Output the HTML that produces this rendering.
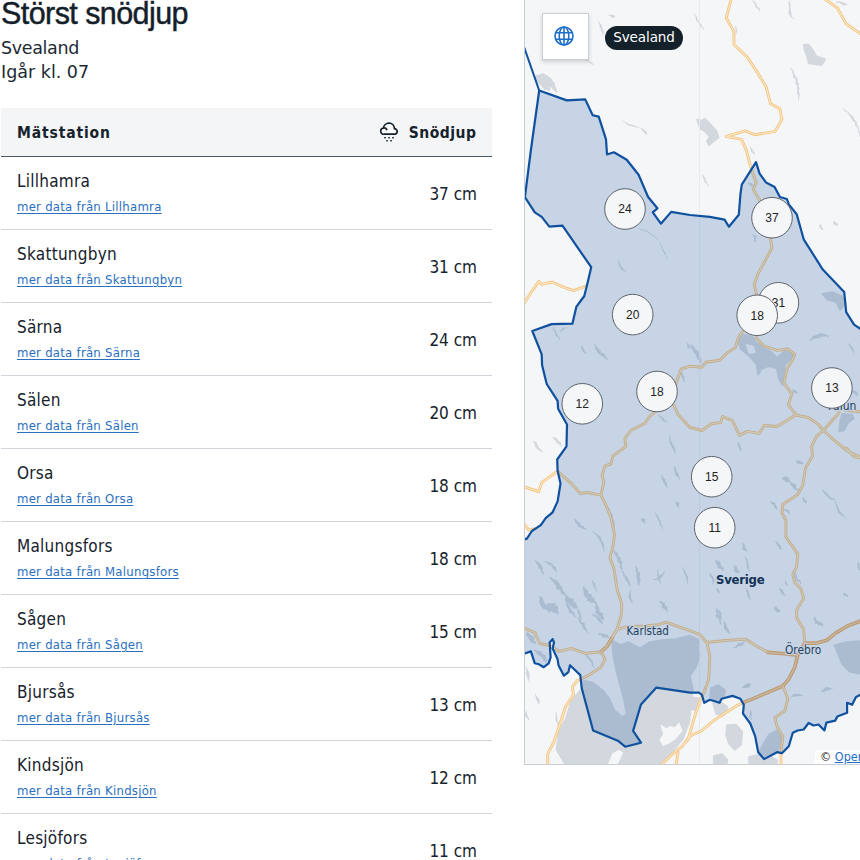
<!DOCTYPE html>
<html lang="sv">
<head>
<meta charset="utf-8">
<title>Störst snödjup</title>
<style>
*{box-sizing:border-box;margin:0;padding:0}
html,body{width:860px;height:860px;overflow:hidden;background:#fff}
body{position:relative;font-family:"DejaVu Sans Condensed","DejaVu Sans","Liberation Sans",sans-serif;color:#16222c}
h1{position:absolute;left:1px;top:-7px;font-family:"Liberation Sans",sans-serif;font-weight:400;font-size:30.5px;line-height:40px;letter-spacing:-0.57px;white-space:nowrap;color:#13202a;-webkit-text-stroke:0.45px #13202a}
.sub{position:absolute;left:1px;font-family:'DejaVu Sans',sans-serif;font-size:17.5px;line-height:24px;letter-spacing:-0.35px;white-space:nowrap;color:#1c2933}
#tbl{position:absolute;left:1px;top:108px;width:491px}
.th{height:49px;background:#f4f5f7;border-bottom:1px solid #4a5963;position:relative;font-weight:700;font-size:15.5px;letter-spacing:0.85px}
.th span{position:absolute;top:15px;line-height:20px;white-space:nowrap}
.th .l{left:16px}
.th .r{right:15.5px;letter-spacing:0.5px}
.th svg{position:absolute;left:379px;top:14px}
.row{height:73px;border-bottom:1px solid #cfd5da;position:relative}
.row .n{position:absolute;left:16px;top:14px;font-size:17px;line-height:20px;letter-spacing:0.25px;white-space:nowrap}
.row a{position:absolute;left:16px;top:42px;font-size:13px;line-height:16px;letter-spacing:0.26px;color:#2a6fc0;text-decoration:underline;text-decoration-thickness:1px;text-underline-offset:2px;white-space:nowrap}
.row .v{position:absolute;right:15px;top:27px;font-size:17px;line-height:20px;letter-spacing:0;white-space:nowrap}
#map{position:absolute;left:524px;top:-1px;width:400px;height:766px;border:1px solid #c9ced4;overflow:hidden;background:#f5f6f8}
#map svg{position:absolute;left:0;top:0}

#globe{position:absolute;left:16.5px;top:12.5px;width:47.5px;height:47px;background:#fff;border:1px solid #c9cfd5;box-shadow:0 2px 4px rgba(20,33,43,.18)}
#globe svg{position:absolute;left:11.5px;top:12px}
#pill{position:absolute;left:80px;top:26px;height:23.5px;width:78px;border-radius:12px;background:#14212b;color:#fff;font-family:'DejaVu Sans',sans-serif;font-size:13.5px;line-height:23.5px;letter-spacing:-0.1px;text-align:center;white-space:nowrap}
#attr{position:absolute;left:290px;top:750px;width:120px;height:14px;background:rgba(255,255,255,.8);font-family:'DejaVu Sans Condensed',sans-serif;font-size:12.5px;line-height:14px;color:#222;padding-left:5px;white-space:nowrap}
#attr a{color:#1f6fc8;text-decoration:underline}
</style>
</head>
<body>
<h1>Störst snödjup</h1>
<div class="sub" style="top:36px">Svealand</div>
<div class="sub" style="top:60px;letter-spacing:0">Igår kl. 07</div>
<div id="tbl">
<div class="th"><span class="l">Mätstation</span><svg width="20" height="21" viewBox="0 0 20 21"><path d="M6.7,7.5 C6.2,6.5 5.1,5.8 3.9,6.0 A3.12,3.12 0 1 0 4.3,12.2 H14.1 A2.76,2.76 0 1 0 14.4,6.7 V6.3 A5.47,5.47 0 0 0 3.5,6.1" fill="#fff" stroke="#13202a" stroke-width="1.7" stroke-linecap="round" stroke-linejoin="round"/><g fill="#13202a"><rect x="4.2" y="14.9" width="1.7" height="1.5" rx=".4"/><rect x="8.2" y="14.9" width="1.7" height="1.5" rx=".4"/><rect x="12.2" y="14.9" width="1.7" height="1.5" rx=".4"/><rect x="6.2" y="17.9" width="1.7" height="1.5" rx=".4"/><rect x="10.2" y="17.9" width="1.7" height="1.5" rx=".4"/></g></svg><span class="r">Snödjup</span></div>
<div class="row"><div class="n">Lillhamra</div><a>mer data från Lillhamra</a><div class="v">37 cm</div></div>
<div class="row"><div class="n">Skattungbyn</div><a>mer data från Skattungbyn</a><div class="v">31 cm</div></div>
<div class="row"><div class="n">Särna</div><a>mer data från Särna</a><div class="v">24 cm</div></div>
<div class="row"><div class="n">Sälen</div><a>mer data från Sälen</a><div class="v">20 cm</div></div>
<div class="row"><div class="n">Orsa</div><a>mer data från Orsa</a><div class="v">18 cm</div></div>
<div class="row"><div class="n">Malungsfors</div><a>mer data från Malungsfors</a><div class="v">18 cm</div></div>
<div class="row"><div class="n">Sågen</div><a>mer data från Sågen</a><div class="v">15 cm</div></div>
<div class="row"><div class="n">Bjursås</div><a>mer data från Bjursås</a><div class="v">13 cm</div></div>
<div class="row"><div class="n">Kindsjön</div><a>mer data från Kindsjön</a><div class="v">12 cm</div></div>
<div class="row"><div class="n">Lesjöfors</div><a>mer data från Lesjöfors</a><div class="v">11 cm</div></div>
</div>
<div id="map">
<svg width="400" height="764" viewBox="525 0 400 764">
<!--MAPCONTENT-->
<g fill="#d3d8de" stroke="#d3d8de" stroke-width="1.6" stroke-linejoin="round">
<path d="M742.4,334.6 L738.4,342.5 L741.0,349.4 L747.3,354.4 L752.3,359.3 L756.2,364.2 L758.2,374.7 L761.6,369.2 L768.1,366.2 L776.6,368.2 L779.0,379.1 L782.5,385.4 L783.7,375.1 L784.9,365.2 L788.8,361.3 L793.2,356.3 L791.2,352.4 L783.3,351.8 L779.9,355.0 L777.0,357.7 L773.0,353.4 L769.1,350.4 L763.1,347.4 L756.2,342.5 L753.3,337.2 L747.3,335.2Z"/>
<path d="M612.0,640.0 L620.0,645.0 L628.0,642.0 L640.0,648.0 L650.0,642.0 L662.0,640.0 L676.0,639.0 L690.0,635.6 L698.0,639.5 L699.9,655.3 L696.0,667.2 L690.0,676.0 L693.0,690.0 L691.4,703.5 L689.3,722.3 L683.0,739.0 L670.5,753.7 L660.0,766.0 L566.0,766.0 L556.4,749.5 L558.5,732.8 L565.9,718.1 L571.1,701.4 L581.6,688.8 L583.6,680.5 L593.0,682.6 L603.5,690.9 L609.8,699.3 L614.0,709.8 L622.4,717.1 L626.6,714.0 L623.4,697.2 L619.2,682.6 L616.1,670.0 L613.0,655.0Z"/>
<path d="M834.3,645.5 L846.0,642.0 L862.0,641.0 L862.0,674.0 L850.0,672.0 L842.0,664.0 L838.0,654.0Z"/>
<path d="M822.0,294.0 L832.0,292.0 L842.0,296.0 L846.0,304.0 L840.0,310.0 L836.0,302.0 L828.0,300.0Z"/>
<path d="M842.2,413.7 L852.1,414.6 L854.1,418.6 L848.1,422.6 L844.2,430.5 L839.2,431.4 L840.2,420.6Z"/>
<path d="M769.0,734.4 L777.0,730.5 L781.9,738.4 L780.0,746.3 L777.0,752.2 L764.1,758.1 L759.2,752.2 L763.1,744.3Z"/>
<path d="M711.0,688.0 L718.0,685.0 L725.0,690.0 L724.0,698.0 L716.0,702.0 L710.0,697.0Z"/>
<path d="M713.0,703.0 L722.0,702.8 L727.6,707.0 L724.0,715.0 L716.0,714.0Z"/>
<path d="M727.0,725.0 L736.0,724.5 L742.4,732.0 L741.0,745.0 L735.0,750.0 L729.0,744.0 L726.0,735.0Z"/>
<path d="M713.7,756.0 L722.0,754.0 L727.6,760.0 L726.0,766.0 L714.0,766.0Z"/>
<path d="M749.0,757.0 L760.0,754.0 L770.0,756.0 L777.0,760.0 L777.0,766.0 L749.0,766.0Z"/>
<path d="M690.0,697.0 L698.0,698.0 L700.0,706.0 L694.0,710.0 L690.0,709.0Z"/>
<path d="M696.9,119.6 L701.9,120.6 L704.8,118.6 L709.8,123.5 L716.7,131.4 L718.7,137.4 L713.7,141.3 L708.8,145.3 L706.8,141.3 L709.8,136.4 L704.8,131.4 L699.9,128.5Z"/>
<path d="M803.7,44.5 L808.6,44.5 L812.6,49.4 L816.5,56.3 L825.4,59.3 L821.4,65.2 L813.5,64.2 L808.6,63.3 L806.6,55.3 L804.6,50.4Z"/>
<path d="M535.8,76.1 L543.7,74.1 L549.7,78.1 L553.6,83.0 L556.6,91.9 L551.6,87.0 L547.7,85.0 L549.7,89.9 L544.7,89.0 L540.8,84.0 L536.8,81.0Z"/>
</g>
<g fill="#f5f6f8" stroke="#f5f6f8" stroke-width="1.2" stroke-linejoin="round">
<path d="M746.3,344.5 L753.3,346.5 L755.2,352.4 L749.3,353.4Z"/>
<path d="M607.7,766.0 L612.9,753.7 L619.2,750.6 L622.4,752.7 L619.2,760.0 L616.0,766.0Z"/>
<path d="M661.1,725.5 L666.0,729.0 L670.5,726.5 L675.0,728.0 L678.9,723.4 L682.0,730.7 L674.7,739.0 L668.4,743.2 L663.2,745.3 L660.0,740.0 L664.0,734.0Z"/>
</g>
<g fill="#d3d8de" stroke="none">
<path d="M608.8,15.5 L610.3,16.2 L611.6,17.3 L613.0,18.1 L614.8,17.5 L615.1,16.7 L614.0,14.9 L612.4,14.8 L610.8,14.7 L609.2,14.5Z"/>
<path d="M598.5,20.9 L598.3,22.8 L599.4,24.3 L599.4,26.1 L600.1,27.7 L600.8,29.3 L601.1,31.1 L602.2,32.5 L602.4,34.3 L604.3,35.5 L604.8,35.3 L603.1,34.1 L604.0,31.9 L603.0,30.4 L602.5,28.7 L602.2,27.0 L601.6,25.3 L600.6,23.8 L599.4,22.4 L598.9,20.7Z"/>
<path d="M584.9,59.7 L586.3,60.9 L588.1,61.2 L589.3,62.7 L590.7,63.6 L592.3,64.4 L593.8,65.2 L594.0,64.9 L592.8,63.6 L591.7,62.1 L589.9,61.7 L588.6,60.5 L586.8,60.0 L585.2,59.4Z"/>
<path d="M622.2,121.0 L624.0,121.8 L625.5,123.1 L627.0,124.4 L628.6,125.6 L630.4,126.1 L632.4,126.3 L634.2,126.9 L636.2,127.2 L638.0,127.8 L639.8,128.4 L640.0,128.0 L638.3,127.1 L636.5,126.4 L634.8,125.5 L633.0,125.0 L631.1,124.4 L629.1,124.3 L627.5,123.2 L625.9,122.2 L624.2,121.2 L622.4,120.6Z"/>
<path d="M640.1,127.9 L641.5,128.9 L642.2,130.5 L643.4,131.5 L644.4,132.9 L645.9,133.7 L646.4,135.5 L646.8,135.1 L647.0,132.8 L646.3,131.2 L644.8,130.3 L643.6,129.2 L642.3,128.2 L640.6,127.4Z"/>
<path d="M693.8,12.9 L694.3,14.9 L695.4,16.5 L695.8,18.5 L696.2,20.6 L697.4,22.1 L698.9,23.5 L699.6,25.4 L701.1,26.7 L702.4,28.3 L703.9,29.7 L704.3,29.4 L703.4,27.7 L702.0,26.3 L701.4,24.3 L700.0,22.9 L698.7,21.3 L697.5,19.8 L697.3,17.7 L696.3,16.0 L695.1,14.4 L694.2,12.7Z"/>
<path d="M751.2,0.1 L752.8,1.2 L753.8,2.8 L754.8,4.3 L755.3,6.3 L756.3,7.8 L757.8,9.1 L759.3,10.3 L759.7,12.3 L760.0,12.1 L760.1,9.6 L759.3,7.9 L757.6,6.9 L756.7,5.3 L756.0,3.4 L755.0,1.9 L753.3,0.8 L751.5,-0.1Z"/>
<path d="M789.9,-0.0 L788.5,2.1 L788.6,4.0 L788.8,5.8 L788.8,7.7 L789.1,9.5 L788.6,11.5 L788.4,13.4 L789.5,15.1 L790.6,16.7 L792.2,18.2 L794.1,19.7 L794.7,19.6 L793.1,18.1 L791.9,16.4 L791.6,14.6 L791.3,12.8 L791.0,11.0 L790.7,9.2 L790.3,7.4 L790.6,5.5 L790.4,3.6 L789.7,1.9 L790.6,-0.2Z"/>
<path d="M789.8,67.4 L790.8,69.3 L792.3,71.0 L792.2,73.1 L793.2,75.0 L793.0,77.1 L794.9,78.8 L795.8,80.6 L795.1,82.9 L796.5,84.6 L796.8,86.7 L797.4,88.6 L797.2,90.7 L797.0,92.8 L797.8,94.8 L798.4,96.7 L798.1,98.9 L798.1,101.0 L798.5,100.8 L799.0,98.6 L799.7,96.4 L799.7,94.3 L799.1,92.4 L798.9,90.3 L799.6,88.1 L798.3,86.3 L799.1,84.0 L797.5,82.3 L797.8,80.2 L797.4,78.2 L795.7,76.5 L794.9,74.6 L793.9,72.7 L793.6,70.7 L791.7,69.1 L790.5,67.3Z"/>
<path d="M842.1,107.8 L843.6,109.2 L844.6,110.9 L846.6,112.0 L848.2,113.3 L849.0,115.2 L850.1,116.8 L851.5,118.3 L852.2,120.2 L854.0,121.4 L855.2,123.0 L855.0,125.5 L856.7,126.8 L857.8,128.4 L857.9,130.7 L858.8,132.5 L859.3,134.5 L859.3,136.8 L859.8,136.5 L859.8,134.2 L859.7,131.9 L859.0,130.0 L858.8,127.8 L857.8,126.1 L856.9,124.3 L856.8,122.1 L855.3,120.6 L853.9,119.2 L853.4,117.1 L852.2,115.5 L850.3,114.4 L849.1,112.7 L847.6,111.4 L845.6,110.3 L844.3,108.7 L842.5,107.5Z"/>
<path d="M835.9,2.4 L837.4,3.1 L839.2,2.7 L840.6,3.7 L842.1,4.4 L843.4,5.7 L845.3,5.1 L846.9,5.4 L847.2,4.4 L845.9,2.9 L844.2,2.9 L842.8,1.9 L841.1,1.9 L839.6,1.2 L837.8,1.5 L836.1,1.6Z"/>
<path d="M749.7,147.2 L750.5,148.4 L750.7,150.0 L750.9,151.6 L752.2,152.6 L753.3,153.7 L754.0,155.0 L754.4,154.8 L754.6,153.0 L754.1,151.6 L752.5,150.7 L752.8,148.9 L751.5,147.9 L750.3,146.8Z"/>
<path d="M735.0,26.0 L735.3,27.6 L735.2,29.2 L735.7,30.8 L735.2,32.5 L736.1,34.0 L736.6,33.9 L736.8,32.3 L737.5,30.6 L736.8,29.0 L736.5,27.4 L735.6,25.9Z"/>
<path d="M702.1,174.6 L702.7,176.2 L702.7,178.2 L704.4,179.2 L704.1,181.4 L705.5,182.5 L706.4,184.0 L707.4,185.4 L708.9,186.6 L709.2,186.4 L708.3,184.9 L707.3,183.5 L706.7,181.9 L705.8,180.4 L705.5,178.6 L704.5,177.2 L703.8,175.6 L702.4,174.4Z"/>
<path d="M747.9,183.2 L748.8,184.8 L750.4,185.3 L751.3,186.9 L753.5,186.5 L754.9,187.2 L755.2,186.6 L754.4,184.9 L752.7,184.6 L751.7,183.1 L749.7,183.2 L748.5,182.2Z"/>
<path d="M751.2,234.4 L752.7,235.3 L753.5,236.6 L754.2,237.9 L754.2,239.6 L754.5,241.1 L755.4,242.3 L756.0,242.0 L756.1,240.3 L755.7,238.8 L756.8,236.6 L755.8,235.5 L753.7,234.8 L752.0,234.0Z"/>
<path d="M820.1,223.9 L819.0,226.0 L819.4,227.3 L820.3,228.4 L821.6,229.2 L822.1,230.4 L822.8,230.1 L823.5,228.2 L821.9,227.5 L821.6,226.2 L821.1,225.0 L820.5,223.7Z"/>
<path d="M833.6,221.2 L833.3,223.1 L833.7,224.6 L835.8,225.0 L836.6,226.2 L837.3,225.8 L838.0,223.7 L836.4,223.0 L835.4,221.9 L834.4,220.8Z"/>
<path d="M552.6,327.2 L552.8,329.2 L553.9,330.7 L554.9,332.3 L555.2,334.2 L555.9,335.9 L558.0,336.9 L558.6,338.7 L559.9,340.1 L560.2,339.9 L559.5,338.2 L558.9,336.4 L557.4,335.1 L556.7,333.4 L556.3,331.5 L555.1,330.1 L553.9,328.6 L553.1,327.0Z"/>
<path d="M560.2,332.2 L561.5,331.3 L563.0,330.8 L563.8,329.2 L565.5,328.8 L566.4,327.5 L566.1,327.1 L564.7,327.8 L562.6,327.8 L561.5,328.9 L560.7,330.4 L559.8,331.8Z"/>
<path d="M580.8,345.9 L581.4,347.5 L581.5,349.5 L582.6,350.7 L583.2,352.3 L584.6,353.3 L587.0,353.6 L587.4,353.3 L586.0,352.3 L584.6,351.2 L584.1,349.5 L583.4,348.0 L582.7,346.5 L581.2,345.6Z"/>
<path d="M593.5,344.0 L594.7,345.5 L595.1,347.7 L595.6,349.8 L597.0,351.2 L597.7,353.0 L599.2,354.3 L600.8,355.5 L602.8,356.3 L604.0,357.8 L605.8,358.7 L607.4,359.9 L608.1,359.2 L606.8,357.8 L605.7,356.2 L604.7,354.6 L603.4,353.1 L601.0,352.7 L600.6,350.5 L599.2,349.2 L597.8,347.9 L596.8,346.3 L595.4,344.9 L594.0,343.6Z"/>
<path d="M687.1,342.9 L686.6,344.7 L687.6,345.7 L686.8,347.6 L688.7,348.1 L690.1,349.0 L690.7,348.7 L690.5,347.3 L689.5,346.3 L689.1,345.0 L688.3,343.8 L687.6,342.7Z"/>
<path d="M679.7,371.1 L680.4,372.6 L681.0,374.2 L681.3,375.8 L681.6,377.5 L682.6,378.9 L683.1,380.6 L684.2,381.9 L685.0,381.6 L684.6,380.0 L683.9,378.5 L684.9,376.3 L683.1,375.2 L683.3,373.4 L681.6,372.2 L680.6,370.8Z"/>
<path d="M658.1,414.9 L659.0,416.7 L660.3,418.1 L662.0,418.9 L662.5,421.1 L664.3,421.7 L666.7,421.7 L667.9,423.1 L668.2,422.7 L667.3,421.0 L665.2,420.6 L664.0,419.2 L663.1,417.4 L661.4,416.7 L660.0,415.5 L658.5,414.5Z"/>
<path d="M669.3,434.7 L669.5,436.7 L669.2,438.8 L669.4,440.7 L669.2,442.8 L670.5,444.4 L671.1,446.2 L672.3,447.8 L673.1,449.5 L674.1,451.2 L674.9,452.9 L676.5,454.4 L676.9,454.3 L675.7,452.7 L675.5,450.7 L675.1,448.8 L674.2,447.1 L673.6,445.3 L672.5,443.7 L671.7,442.0 L670.7,440.3 L670.8,438.2 L670.5,436.3 L670.0,434.5Z"/>
<path d="M533.3,440.7 L533.8,442.6 L534.7,444.2 L535.0,446.4 L536.3,447.7 L537.2,449.4 L539.1,450.3 L540.6,451.4 L542.7,452.2 L543.2,451.8 L541.7,450.6 L540.6,449.1 L539.1,447.9 L538.3,446.2 L537.2,444.7 L536.9,442.6 L534.9,441.8 L533.8,440.3Z"/>
<path d="M552.5,437.5 L553.6,438.8 L554.4,440.3 L556.2,440.8 L556.3,443.2 L558.2,443.6 L559.4,444.8 L560.7,445.8 L562.6,446.2 L563.0,445.8 L561.4,445.0 L561.0,443.0 L560.2,441.4 L558.3,441.0 L557.6,439.3 L556.4,438.1 L554.7,437.6 L553.1,436.8Z"/>
<path d="M689.8,344.6 L690.9,346.1 L691.5,347.9 L692.3,349.6 L693.0,351.4 L694.0,352.9 L695.5,354.2 L695.8,356.2 L697.0,357.6 L697.3,359.6 L699.0,360.8 L699.8,362.4 L701.6,363.5 L702.3,363.1 L701.4,361.4 L701.3,359.3 L700.5,357.6 L700.0,355.7 L699.0,354.2 L698.7,352.1 L697.7,350.6 L695.4,349.9 L695.2,347.8 L693.9,346.4 L692.2,345.3 L690.6,344.1Z"/>
<path d="M809.7,340.4 L811.6,340.7 L813.1,339.0 L814.9,338.6 L816.8,338.5 L818.5,337.9 L820.4,337.8 L821.9,336.1 L824.0,337.3 L825.6,335.7 L827.8,337.3 L829.4,335.8 L829.2,335.2 L827.4,335.6 L825.2,333.8 L823.4,334.1 L821.2,332.7 L819.6,333.8 L817.7,333.9 L816.1,335.3 L814.3,335.6 L812.6,336.3 L811.2,338.9 L809.4,339.1Z"/>
<path d="M847.2,342.4 L848.0,344.0 L849.1,345.3 L849.9,346.9 L850.4,348.6 L851.6,349.8 L852.8,351.2 L853.4,352.8 L854.1,354.4 L854.4,354.2 L854.1,352.4 L853.8,350.6 L853.5,348.8 L852.2,347.5 L851.6,345.9 L850.1,344.8 L848.7,343.6 L847.5,342.2Z"/>
<path d="M792.0,390.0 L792.7,391.6 L793.6,392.9 L795.1,392.8 L796.3,393.4 L797.8,393.3 L798.1,392.7 L797.1,391.7 L796.1,390.7 L794.9,390.2 L793.7,389.6 L792.3,389.4Z"/>
<path d="M852.2,390.6 L852.2,392.3 L853.4,393.2 L854.9,393.9 L855.5,395.3 L856.7,396.2 L857.5,395.7 L857.5,393.9 L858.0,391.9 L856.2,391.3 L854.6,390.7 L852.9,390.0Z"/>
<path d="M737.2,442.3 L738.0,443.8 L737.4,445.8 L738.4,447.3 L739.3,448.9 L740.3,450.4 L741.3,451.9 L741.7,451.8 L741.4,450.1 L741.3,448.3 L740.7,446.6 L739.6,445.1 L739.7,443.3 L738.0,442.0Z"/>
<path d="M795.9,462.6 L797.5,463.4 L799.0,463.7 L800.7,463.8 L802.2,464.1 L803.9,463.5 L804.0,462.8 L802.5,462.0 L800.9,461.8 L799.3,461.8 L797.7,461.5 L796.0,461.8Z"/>
<path d="M573.9,518.8 L574.8,520.7 L575.5,522.7 L577.2,523.7 L577.7,526.0 L579.1,527.4 L581.4,527.7 L582.9,528.9 L585.0,529.6 L587.3,529.9 L587.7,529.5 L585.9,528.5 L584.4,527.4 L583.3,525.7 L580.9,525.5 L580.0,523.5 L578.7,522.1 L577.0,521.0 L575.7,519.6 L574.5,518.1Z"/>
<path d="M592.6,531.3 L593.6,533.0 L595.1,534.4 L596.9,535.7 L597.8,537.4 L598.9,539.0 L599.7,540.8 L600.6,542.5 L601.6,544.2 L602.0,546.2 L603.2,547.8 L602.9,550.2 L603.9,551.9 L604.5,551.6 L603.8,549.7 L604.3,547.2 L603.9,545.2 L603.4,543.3 L602.4,541.6 L601.4,539.9 L601.1,537.9 L599.8,536.3 L598.2,535.0 L596.4,533.7 L594.3,532.6 L593.1,531.0Z"/>
<path d="M534.4,559.9 L535.7,561.4 L535.9,563.5 L537.8,564.6 L538.1,566.7 L539.0,568.4 L540.8,569.5 L540.9,571.7 L542.2,573.1 L543.0,574.9 L543.8,574.4 L543.9,572.2 L542.4,570.8 L542.9,568.3 L542.1,566.5 L541.2,564.8 L539.8,563.4 L538.3,562.1 L536.5,560.9 L535.1,559.5Z"/>
<path d="M544.0,561.4 L545.7,562.3 L547.8,562.9 L548.4,564.9 L551.2,564.8 L551.7,567.0 L552.8,568.4 L554.4,569.5 L555.2,571.3 L556.1,573.1 L556.5,572.7 L556.4,570.1 L556.0,567.9 L555.1,566.1 L552.9,565.7 L552.6,563.4 L550.5,562.9 L548.7,562.0 L546.5,561.6 L544.7,560.7Z"/>
<path d="M549.4,577.8 L550.7,579.2 L551.7,580.8 L553.3,581.9 L554.1,583.8 L555.5,585.0 L556.1,587.0 L556.3,589.3 L559.0,589.5 L560.5,590.7 L560.7,593.1 L562.2,594.3 L564.1,595.1 L565.3,596.6 L566.7,595.4 L565.2,594.1 L564.8,592.0 L563.0,591.0 L562.5,589.0 L562.4,586.5 L560.3,585.9 L559.9,583.7 L558.4,582.4 L557.5,580.7 L555.6,579.9 L553.5,579.2 L552.2,577.9 L550.7,576.7Z"/>
<path d="M565.6,596.4 L564.8,599.6 L565.9,601.2 L567.2,602.4 L568.7,603.6 L569.3,605.5 L571.5,606.0 L572.6,607.4 L574.2,608.5 L576.8,608.5 L578.1,607.4 L576.9,605.9 L576.6,603.8 L575.1,602.6 L573.7,601.4 L573.8,598.8 L571.6,598.3 L569.4,597.9 L568.2,596.5 L566.9,595.2Z"/>
<path d="M577.2,608.1 L577.4,610.0 L577.7,611.8 L577.9,613.6 L579.3,615.0 L579.1,617.0 L579.7,618.6 L581.3,620.0 L582.0,619.8 L581.1,618.2 L581.3,616.2 L581.0,614.4 L579.9,612.9 L579.8,611.0 L578.5,609.6 L577.6,608.0Z"/>
<path d="M538.7,596.4 L539.7,597.9 L539.4,599.8 L539.1,601.7 L539.6,603.4 L540.6,604.9 L542.6,606.1 L544.1,605.7 L544.1,603.9 L544.6,601.9 L543.2,600.5 L543.4,598.6 L541.7,597.3 L540.1,596.0Z"/>
<path d="M546.1,605.0 L547.3,606.4 L548.9,607.5 L550.5,608.5 L551.6,610.0 L552.3,612.0 L553.9,613.0 L556.2,613.2 L557.5,614.5 L559.2,612.7 L558.0,611.2 L558.0,608.5 L558.1,605.6 L555.4,605.8 L555.6,602.8 L552.8,603.2 L550.0,603.4 L547.7,603.2Z"/>
<path d="M583.2,586.5 L582.9,589.1 L583.7,590.9 L583.6,593.5 L584.0,595.6 L585.1,597.3 L587.4,598.1 L587.0,600.8 L589.2,601.6 L591.1,602.7 L594.1,602.9 L595.8,604.1 L597.2,603.1 L596.2,601.4 L594.3,600.4 L594.6,597.7 L591.5,597.5 L592.2,594.6 L589.8,593.9 L588.1,592.7 L588.0,590.3 L586.1,589.3 L584.7,587.8 L584.1,585.8Z"/>
<path d="M595.9,604.0 L595.0,606.6 L595.3,608.5 L596.1,610.3 L594.9,613.0 L597.0,614.1 L598.6,615.6 L599.7,617.2 L601.0,618.8 L602.3,620.3 L604.2,619.5 L603.8,617.5 L602.9,615.8 L603.5,613.4 L601.1,612.4 L599.2,611.1 L599.4,608.9 L599.0,606.9 L597.5,605.5 L597.1,603.5Z"/>
<path d="M592.2,579.9 L592.2,581.9 L592.7,583.7 L593.4,585.4 L593.8,587.3 L595.0,588.8 L595.9,590.5 L596.9,592.0 L597.5,591.8 L596.6,590.1 L595.9,588.4 L595.2,586.7 L595.5,584.6 L594.6,582.9 L593.2,581.5 L592.7,579.7Z"/>
<path d="M604.6,503.5 L605.8,505.2 L606.4,507.0 L607.0,508.9 L607.8,510.7 L607.3,512.9 L608.8,514.5 L610.3,516.0 L610.6,518.0 L610.9,520.0 L611.0,522.0 L611.5,523.9 L612.6,525.5 L613.0,527.5 L613.7,529.3 L613.6,531.4 L614.2,533.2 L615.0,533.0 L614.8,531.0 L614.8,528.9 L614.6,526.9 L614.8,524.8 L614.5,522.8 L614.0,521.0 L613.2,519.2 L613.1,517.2 L612.9,515.2 L611.9,513.4 L610.2,511.9 L610.0,510.0 L609.4,508.1 L607.7,506.6 L606.7,504.9 L605.4,503.3Z"/>
<path d="M611.9,549.2 L613.3,550.7 L614.3,552.4 L614.5,554.4 L615.9,555.9 L616.9,557.6 L617.3,559.5 L617.5,561.5 L619.1,562.9 L620.2,564.5 L619.6,566.9 L620.5,568.5 L622.0,570.0 L622.8,569.6 L622.2,567.8 L621.8,565.9 L622.1,563.7 L622.3,561.5 L620.4,560.2 L621.0,557.9 L618.9,556.7 L617.9,555.0 L617.7,553.0 L615.8,551.8 L614.5,550.2 L612.8,548.9Z"/>
<path d="M621.4,570.3 L621.8,572.2 L623.1,573.6 L623.0,575.8 L624.8,576.9 L624.7,579.1 L626.1,580.4 L627.0,582.0 L628.3,583.4 L628.8,585.3 L630.6,586.5 L631.1,586.2 L630.2,584.6 L629.9,582.6 L629.3,580.8 L628.1,579.4 L627.5,577.6 L626.4,576.1 L624.6,574.9 L624.2,573.0 L623.3,571.4 L622.1,569.9Z"/>
<path d="M634.6,566.1 L635.5,567.8 L635.5,569.6 L635.8,571.5 L636.8,573.2 L636.5,575.1 L636.5,576.9 L637.0,578.7 L637.4,580.5 L637.3,582.4 L637.9,584.2 L637.4,586.1 L638.1,586.0 L639.9,583.9 L639.5,582.1 L640.8,580.0 L640.5,578.2 L639.2,576.5 L640.5,574.5 L639.9,572.7 L637.8,571.2 L638.1,569.3 L636.7,567.6 L635.6,565.9Z"/>
<path d="M629.8,590.0 L629.8,591.7 L629.0,593.6 L628.8,595.3 L628.4,597.0 L628.8,598.7 L630.5,600.0 L630.7,601.7 L632.6,603.0 L633.1,602.9 L632.3,601.4 L632.3,599.7 L631.1,598.2 L630.9,596.6 L631.2,594.8 L630.7,593.2 L631.0,591.5 L630.4,589.9Z"/>
<path d="M641.3,518.4 L640.9,520.3 L642.2,521.3 L642.9,522.6 L644.9,523.1 L645.7,522.6 L645.0,521.3 L645.7,519.2 L643.4,518.8 L642.2,517.9Z"/>
<path d="M654.9,512.5 L655.4,514.3 L656.8,515.8 L656.9,517.8 L657.8,519.5 L659.0,521.1 L659.5,522.9 L659.6,524.9 L661.1,526.4 L662.0,528.1 L661.6,530.3 L662.1,530.1 L662.7,527.8 L662.1,526.0 L661.1,524.3 L661.0,522.3 L660.7,520.4 L659.1,519.0 L658.5,517.2 L658.2,515.3 L656.4,514.0 L655.3,512.3Z"/>
<path d="M660.6,475.0 L661.9,476.5 L661.5,478.7 L662.8,480.2 L662.9,482.2 L664.6,483.5 L664.7,485.5 L666.3,486.9 L667.0,488.6 L667.7,488.3 L667.2,486.5 L666.8,484.6 L666.8,482.6 L665.3,481.2 L665.2,479.2 L663.4,477.9 L662.9,476.1 L661.2,474.7Z"/>
<path d="M674.0,465.9 L674.5,467.7 L674.2,469.9 L674.7,471.7 L674.8,473.7 L675.7,475.4 L677.2,476.8 L678.8,478.1 L679.5,479.9 L680.3,479.5 L679.8,477.7 L678.9,476.0 L679.0,474.0 L677.3,472.6 L676.2,471.1 L676.4,468.9 L675.4,467.3 L674.8,465.5Z"/>
<path d="M676.3,500.9 L675.2,503.0 L676.4,504.2 L676.5,505.7 L677.5,507.0 L678.3,508.3 L679.1,508.0 L678.8,506.4 L679.1,504.7 L679.6,502.8 L677.1,502.2 L677.0,500.6Z"/>
<path d="M653.3,579.9 L655.5,579.9 L657.6,579.8 L659.3,579.1 L660.9,578.3 L662.2,577.0 L663.1,575.1 L664.2,573.6 L665.3,572.0 L664.9,571.3 L663.4,572.4 L662.3,574.0 L660.6,574.7 L659.3,576.0 L658.0,577.2 L656.6,578.3 L654.8,578.9 L653.0,579.4Z"/>
<path d="M657.8,568.6 L657.4,570.5 L657.1,572.3 L657.5,574.0 L657.5,575.8 L657.9,577.5 L658.1,579.2 L658.7,580.9 L659.8,582.4 L660.9,584.0 L661.4,583.9 L660.7,582.3 L660.2,580.6 L659.9,578.9 L659.5,577.2 L659.3,575.4 L658.6,573.8 L658.0,572.2 L658.5,570.3 L658.3,568.5Z"/>
<path d="M682.3,566.5 L682.5,568.5 L683.1,570.2 L684.1,571.9 L684.3,573.8 L685.5,575.3 L685.6,577.3 L686.8,578.9 L686.5,581.0 L686.9,582.8 L687.7,584.5 L688.1,584.4 L687.8,582.5 L687.7,580.6 L688.2,578.4 L687.8,576.6 L687.0,574.9 L685.8,573.3 L685.6,571.4 L684.4,569.8 L683.1,568.2 L682.9,566.4Z"/>
<path d="M659.4,601.4 L659.8,603.2 L661.7,604.0 L661.6,606.2 L662.1,607.9 L663.8,608.8 L665.2,609.8 L666.3,611.1 L667.6,612.3 L668.3,611.8 L667.2,610.4 L667.7,608.0 L667.3,606.2 L665.0,605.8 L665.2,603.5 L663.8,602.4 L661.7,601.8 L660.6,600.6Z"/>
<path d="M782.0,478.0 L782.7,480.0 L784.4,479.9 L785.1,481.8 L786.5,482.3 L788.3,482.1 L789.8,482.5 L790.6,480.9 L789.4,479.9 L788.9,477.6 L787.4,477.2 L786.3,476.0 L784.5,476.4 L782.4,477.2Z"/>
<path d="M790.2,481.9 L789.9,484.4 L791.2,485.5 L792.3,486.9 L793.0,488.6 L794.6,489.4 L796.4,490.2 L798.0,491.0 L798.9,490.2 L798.1,488.6 L796.0,488.2 L796.3,485.6 L795.3,484.2 L793.6,483.4 L791.7,482.8 L790.6,481.5Z"/>
<path d="M796.1,460.8 L796.9,462.7 L798.7,462.4 L800.0,463.4 L801.3,464.2 L802.8,464.4 L803.1,463.8 L801.7,463.1 L801.1,460.7 L799.6,460.4 L797.7,460.8 L796.4,460.0Z"/>
<path d="M770.0,502.0 L771.1,503.4 L772.7,504.4 L774.1,505.5 L774.0,508.0 L776.1,508.4 L776.7,510.3 L777.3,509.7 L777.3,507.4 L776.2,506.0 L775.7,504.1 L774.6,502.7 L772.8,501.9 L770.5,501.6Z"/>
<path d="M783.8,509.2 L784.8,510.5 L786.0,511.5 L787.4,512.2 L788.5,513.4 L789.8,514.2 L790.4,513.5 L789.3,512.3 L789.2,510.1 L787.3,509.9 L786.0,509.0 L784.3,508.6Z"/>
<path d="M801.9,498.1 L802.7,499.3 L803.1,500.9 L803.8,502.2 L805.6,502.4 L806.5,503.5 L807.0,503.0 L807.0,501.0 L805.8,500.2 L804.7,499.3 L804.3,497.7 L802.4,497.6Z"/>
<path d="M821.7,490.4 L823.1,491.6 L823.9,493.4 L825.5,494.3 L826.6,495.8 L828.0,497.0 L829.1,498.5 L830.4,499.8 L833.1,499.5 L834.6,500.5 L835.1,499.9 L834.1,498.2 L831.7,498.2 L830.4,497.0 L829.1,495.7 L828.3,493.9 L826.5,493.1 L825.2,491.8 L824.0,490.4 L822.3,489.6Z"/>
<path d="M834.5,500.3 L835.0,502.3 L835.3,504.3 L836.2,506.0 L836.5,508.0 L837.5,509.6 L837.7,511.7 L838.7,513.3 L840.6,514.4 L841.8,515.8 L844.1,516.7 L845.1,518.2 L847.3,519.1 L847.6,518.9 L845.6,517.9 L844.7,516.2 L843.0,515.1 L842.4,513.2 L840.7,512.1 L839.5,510.6 L839.0,508.7 L838.1,507.0 L837.4,505.2 L836.2,503.7 L835.7,501.8 L834.9,500.1Z"/>
<path d="M774.8,541.1 L775.9,542.6 L776.6,544.3 L777.5,545.8 L779.0,547.0 L779.3,549.0 L780.8,550.1 L781.5,549.7 L781.1,547.8 L781.1,545.6 L779.1,544.7 L778.5,543.0 L777.1,541.7 L775.5,540.7Z"/>
<path d="M742.3,543.3 L742.7,544.9 L742.6,546.8 L741.8,548.9 L743.5,549.9 L745.1,551.1 L747.0,552.0 L747.4,551.8 L746.5,550.4 L746.3,548.7 L745.0,547.5 L745.1,545.7 L744.4,544.2 L743.1,543.0Z"/>
<path d="M715.0,560.8 L715.7,562.6 L716.3,564.5 L717.7,565.6 L717.6,568.1 L720.0,568.5 L721.4,569.7 L723.2,570.7 L724.0,570.0 L723.8,567.8 L722.2,566.8 L721.1,565.3 L720.7,563.2 L719.8,561.6 L718.0,560.8 L716.0,560.0Z"/>
<path d="M733.3,566.5 L734.4,567.9 L733.9,570.3 L734.8,571.8 L736.2,572.9 L739.1,573.0 L739.9,572.3 L739.3,570.7 L737.7,569.7 L737.1,568.0 L736.8,566.1 L734.3,565.8Z"/>
<path d="M744.7,556.1 L745.1,557.9 L745.9,559.6 L746.3,561.3 L746.2,563.2 L747.3,564.9 L746.5,566.9 L747.5,568.6 L748.5,570.2 L749.1,572.0 L749.7,571.8 L749.7,569.9 L748.9,568.2 L748.7,566.4 L748.8,564.5 L747.7,562.9 L747.8,561.0 L747.3,559.2 L746.0,557.6 L745.1,556.0Z"/>
<path d="M709.3,573.2 L709.6,574.9 L709.9,576.7 L711.7,578.0 L712.2,579.7 L712.7,581.4 L712.5,583.3 L713.0,585.0 L713.5,584.9 L713.2,583.1 L714.7,580.9 L714.2,579.2 L713.3,577.6 L712.6,576.0 L711.5,574.5 L710.0,573.0Z"/>
<path d="M716.3,588.4 L716.4,590.1 L717.1,591.3 L718.5,592.2 L719.6,593.3 L720.1,592.9 L719.7,591.5 L718.7,590.4 L718.6,588.8 L716.9,588.1Z"/>
<path d="M744.7,588.1 L745.9,589.6 L746.5,591.4 L747.3,593.1 L747.0,595.2 L747.8,596.9 L749.1,598.3 L750.0,600.0 L750.8,599.7 L750.4,597.8 L749.5,596.2 L749.6,594.1 L749.0,592.3 L748.5,590.6 L746.7,589.3 L745.4,587.8Z"/>
<path d="M779.1,587.9 L779.3,589.8 L780.3,591.2 L781.0,592.7 L781.8,594.2 L783.5,595.0 L784.2,596.6 L784.9,596.1 L784.6,594.2 L784.0,592.6 L782.9,591.3 L782.7,589.4 L780.6,588.9 L779.6,587.6Z"/>
<path d="M785.1,579.9 L784.8,581.6 L784.7,583.2 L785.4,584.3 L786.6,585.2 L787.7,586.2 L788.0,586.0 L788.0,584.5 L787.1,583.4 L786.2,582.4 L785.8,581.1 L785.5,579.7Z"/>
<path d="M793.9,572.0 L794.0,574.0 L794.4,575.8 L794.9,577.5 L796.1,578.8 L796.2,580.8 L798.6,581.4 L799.6,582.8 L800.3,584.4 L801.2,583.9 L800.9,582.0 L800.5,580.3 L798.3,579.5 L797.4,578.1 L796.7,576.4 L796.7,574.5 L795.5,573.1 L794.7,571.6Z"/>
<path d="M773.6,608.6 L774.1,610.4 L775.8,610.5 L776.4,612.2 L778.1,612.3 L779.9,612.2 L780.5,611.3 L778.8,611.2 L778.6,608.9 L777.3,608.3 L775.7,608.1 L773.9,608.2Z"/>
<path d="M717.3,608.9 L717.5,610.6 L717.7,612.3 L719.3,613.5 L718.6,615.6 L718.9,617.2 L720.2,618.5 L720.6,620.2 L721.1,620.0 L721.5,618.0 L721.4,616.3 L721.3,614.5 L721.8,612.6 L720.1,611.4 L718.9,610.1 L718.1,608.6Z"/>
<path d="M842.6,593.4 L843.7,594.7 L844.3,596.5 L846.7,596.1 L848.0,597.0 L848.4,596.4 L847.9,594.6 L846.1,594.3 L845.3,592.7 L843.1,592.9Z"/>
<path d="M858.1,561.0 L858.2,562.7 L857.2,564.6 L857.3,566.3 L857.8,568.0 L858.8,569.5 L860.1,571.0 L860.6,570.9 L860.1,569.2 L859.9,567.6 L859.4,565.9 L859.4,564.2 L859.0,562.5 L858.4,560.9Z"/>
<path d="M715.6,608.1 L716.4,609.7 L715.4,611.9 L717.2,613.2 L715.5,615.5 L716.2,617.2 L718.2,618.4 L719.2,620.0 L719.2,621.8 L720.0,623.5 L721.1,625.0 L721.9,624.7 L721.3,623.1 L720.7,621.4 L720.8,619.5 L720.8,617.7 L718.8,616.4 L718.5,614.7 L718.5,612.8 L717.6,611.2 L717.7,609.4 L716.2,607.9Z"/>
<path d="M724.0,621.0 L723.6,623.2 L724.1,624.9 L723.6,627.1 L724.3,628.8 L725.4,630.2 L726.8,631.5 L727.8,633.1 L730.0,634.0 L730.9,633.6 L729.6,632.2 L729.0,630.5 L728.3,628.9 L727.5,627.3 L726.3,625.9 L726.2,623.9 L724.9,622.6 L724.8,620.6Z"/>
<path d="M773.7,607.3 L775.3,607.9 L776.2,609.2 L777.2,610.5 L778.6,611.2 L780.0,612.0 L780.4,611.5 L779.9,609.7 L778.5,609.0 L777.2,608.1 L776.5,606.5 L774.2,606.8Z"/>
<path d="M813.8,617.2 L813.9,619.7 L814.9,621.3 L815.1,623.6 L817.1,624.1 L818.6,625.3 L820.8,625.6 L822.6,626.4 L823.4,625.6 L822.7,623.7 L821.4,622.4 L819.5,621.7 L817.8,621.0 L816.3,619.8 L815.7,617.9 L814.6,616.4Z"/>
<path d="M733.9,647.7 L736.5,648.8 L737.3,646.7 L739.1,646.2 L741.1,646.0 L742.8,645.4 L743.7,643.4 L744.9,641.9 L744.7,641.4 L742.7,641.5 L741.4,642.9 L739.3,642.8 L737.8,643.8 L736.6,645.2 L735.3,646.7 L733.5,647.0Z"/>
<path d="M741.9,687.8 L744.0,688.6 L745.6,687.9 L747.5,688.2 L748.9,687.4 L750.2,686.2 L750.9,683.8 L750.6,683.1 L749.0,683.6 L747.1,683.2 L745.7,684.2 L744.3,685.0 L743.1,686.5 L741.7,687.3Z"/>
<path d="M791.1,698.1 L792.7,696.5 L794.5,697.0 L796.1,696.6 L797.8,696.2 L799.5,696.0 L801.3,696.1 L803.0,696.2 L802.9,695.2 L801.1,694.4 L799.4,694.0 L797.7,694.2 L795.9,693.4 L794.2,693.9 L792.5,694.7 L791.0,697.3Z"/>
<path d="M821.1,692.2 L822.8,692.1 L824.6,691.9 L826.0,690.3 L828.0,690.7 L829.6,689.8 L831.3,689.6 L833.1,689.3 L832.9,688.7 L830.9,688.0 L829.0,687.5 L827.0,686.8 L825.3,687.4 L823.9,688.9 L822.3,689.8 L820.8,691.3Z"/>
<path d="M750.1,710.1 L749.9,711.8 L749.7,713.5 L749.9,715.2 L748.9,716.9 L751.0,718.4 L750.9,720.1 L751.7,720.0 L752.1,718.3 L750.8,716.8 L752.4,714.9 L751.9,713.3 L751.3,711.7 L750.6,710.0Z"/>
<path d="M539.7,602.4 L540.3,604.8 L541.2,606.7 L542.5,608.0 L543.6,609.6 L545.8,609.5 L547.5,610.2 L548.0,612.7 L551.1,611.3 L553.0,611.8 L554.9,612.2 L555.8,610.8 L554.4,609.7 L553.4,607.8 L550.7,608.8 L549.5,607.3 L548.5,605.4 L546.4,605.3 L545.4,603.7 L543.9,602.6 L541.8,602.5 L540.6,601.1Z"/>
<path d="M565.4,600.4 L566.2,602.2 L565.8,604.8 L566.9,606.5 L567.7,608.3 L568.6,610.1 L568.7,612.4 L570.7,613.4 L572.8,614.3 L573.5,616.3 L575.8,617.1 L578.1,618.0 L578.8,617.5 L576.4,616.7 L574.8,615.4 L574.7,613.1 L573.3,611.7 L571.5,610.5 L571.0,608.5 L570.1,606.7 L568.8,605.2 L567.7,603.6 L566.9,601.8 L565.8,600.1Z"/>
<path d="M578.3,617.8 L578.4,619.9 L579.1,621.6 L579.9,623.2 L581.4,624.4 L582.3,626.0 L582.8,627.8 L583.8,629.3 L585.6,630.3 L586.4,631.9 L587.1,633.6 L588.0,633.0 L587.3,631.3 L586.9,629.4 L585.8,627.9 L585.2,626.2 L585.2,624.0 L584.1,622.6 L581.4,622.2 L580.8,620.4 L579.7,619.0 L579.0,617.4Z"/>
<path d="M591.8,614.2 L593.0,615.6 L594.6,616.7 L596.6,617.2 L596.9,619.7 L598.4,620.8 L599.6,622.2 L601.3,623.1 L602.2,624.8 L603.0,624.0 L602.5,621.8 L601.2,620.4 L600.5,618.5 L599.1,617.2 L598.0,615.7 L595.9,615.3 L594.0,614.6 L592.3,613.6Z"/>
<path d="M598.1,632.9 L599.1,635.1 L601.2,635.0 L602.3,637.1 L604.0,637.9 L606.4,637.1 L607.7,638.6 L610.0,637.9 L610.2,637.4 L608.4,637.1 L607.4,634.6 L605.3,634.7 L603.7,633.8 L601.9,633.3 L599.9,633.3 L598.3,632.3Z"/>
<path d="M526.4,632.5 L526.1,635.0 L527.2,636.5 L528.7,637.7 L529.0,639.9 L530.5,641.1 L531.3,642.9 L533.8,643.3 L535.4,644.4 L536.3,643.8 L535.9,641.8 L534.0,640.8 L534.6,638.0 L533.8,636.2 L531.4,635.7 L530.1,634.4 L528.7,633.1 L527.2,631.9Z"/>
<path d="M533.8,650.2 L535.1,651.4 L536.4,652.6 L537.1,654.5 L538.6,655.5 L540.3,656.2 L541.6,657.4 L542.8,658.7 L543.4,660.7 L545.1,661.4 L546.3,662.7 L547.5,661.5 L546.8,659.7 L546.0,657.8 L545.9,655.3 L544.0,654.8 L542.3,654.1 L541.8,652.0 L540.2,651.1 L537.9,651.0 L536.5,649.9 L534.7,649.2Z"/>
<path d="M583.3,653.4 L585.0,654.4 L585.7,656.2 L587.1,657.4 L587.9,659.1 L589.8,660.0 L590.2,662.0 L591.8,663.1 L591.7,665.4 L592.9,666.8 L594.0,668.2 L594.6,667.8 L593.7,666.2 L593.0,664.4 L593.1,662.1 L592.4,660.4 L591.1,659.0 L589.7,657.8 L588.7,656.3 L587.1,655.2 L585.7,653.9 L583.8,653.0Z"/>
<path d="M525.5,667.1 L525.9,669.0 L526.6,670.8 L525.8,672.9 L526.2,674.8 L527.0,676.5 L527.3,678.4 L528.2,680.2 L528.8,682.0 L529.9,681.8 L529.1,680.0 L529.4,678.0 L529.9,676.0 L529.3,674.1 L529.1,672.2 L528.2,670.5 L527.3,668.7 L526.3,666.9Z"/>
<path d="M534.9,694.0 L535.4,695.8 L535.7,697.6 L536.1,699.4 L537.0,700.9 L537.8,702.5 L538.3,704.3 L539.2,703.9 L539.9,701.7 L539.5,699.9 L538.9,698.2 L537.3,696.9 L536.4,695.4 L535.6,693.7Z"/>
<path d="M526.0,711.0 L525.6,712.8 L524.6,714.8 L525.1,716.3 L526.2,717.6 L528.0,718.7 L528.1,720.3 L529.0,720.0 L529.1,718.3 L528.2,716.9 L527.4,715.5 L527.0,714.0 L527.0,712.3 L526.5,710.8Z"/>
<path d="M555.9,712.1 L555.7,713.9 L555.6,715.7 L555.6,717.5 L555.4,719.3 L555.5,721.1 L557.1,722.6 L557.2,724.4 L558.1,726.1 L558.6,726.0 L558.3,724.2 L558.7,722.4 L557.8,720.7 L557.2,719.0 L557.2,717.3 L557.1,715.5 L556.4,713.8 L556.7,712.0Z"/>
<path d="M618.1,260.0 L617.9,262.2 L618.6,263.9 L618.9,265.9 L620.3,267.2 L620.8,269.0 L622.2,270.2 L624.0,271.2 L625.8,272.1 L626.2,271.9 L625.1,270.5 L623.6,269.2 L622.6,267.8 L621.2,266.5 L620.5,264.9 L619.7,263.2 L618.9,261.5 L618.5,259.7Z"/>
<path d="M636.5,228.2 L638.5,228.5 L640.2,229.4 L641.8,230.5 L643.8,230.8 L645.6,231.6 L647.4,232.2 L648.9,233.4 L650.8,234.0 L652.0,235.7 L653.8,236.5 L655.2,237.8 L656.8,239.0 L658.3,240.2 L658.4,240.1 L657.0,238.6 L655.6,237.2 L654.2,235.7 L652.5,234.9 L651.2,233.3 L649.3,232.7 L647.9,231.3 L646.0,230.8 L644.2,230.1 L642.3,229.6 L640.5,228.8 L638.7,228.2 L636.7,227.9Z"/>
<path d="M658.1,240.1 L659.2,241.8 L659.9,243.5 L660.4,245.4 L661.4,247.0 L661.8,249.0 L662.7,250.7 L663.6,252.3 L664.3,254.1 L665.3,255.8 L666.3,257.4 L667.4,259.0 L667.9,260.9 L668.3,260.7 L667.9,258.8 L666.9,257.1 L665.8,255.6 L665.4,253.6 L664.8,251.8 L663.8,250.2 L662.6,248.6 L662.2,246.7 L661.1,245.1 L660.4,243.3 L659.6,241.6 L658.4,240.0Z"/>
</g>
<path d="M699.5,0 V766" stroke="#e8ebee" stroke-width="1" fill="none"/>
<g fill="none" stroke-linejoin="round" stroke-linecap="round">
<g stroke="#f3c482" stroke-width="2.9">
<path d="M731.5,-2.0 L726.2,17.8 L733.9,31.6 L733.9,44.5 L747.3,57.3 L757.2,72.1 L766.1,87.0 L770.6,103.8 L779.9,108.7 L781.9,119.6 L775.0,131.4 L755.2,134.8 L745.3,130.8 L726.2,136.4 L741.4,139.3 L746.3,150.2 L749.3,161.9 L752.9,173.7 L756.2,182.6 L753.3,189.5 L759.2,199.4 L765.0,212.0 L772.0,228.0 L770.6,239.3 L772.0,247.8 L765.1,260.7 L758.2,273.5 L754.2,284.4 L756.2,293.3 L757.0,305.0"/>
<path d="M823.4,-2.0 L837.3,7.9 L846.2,23.7 L862.0,35.0"/>
<path d="M523.0,305.0 L531.9,291.3 L538.8,281.4 L541.7,284.4 L552.6,282.0 L561.5,286.4 L573.4,290.7 L585.2,286.4"/>
<path d="M742.4,331.6 L738.4,337.6 L735.5,347.4 L726.6,353.4 L719.7,360.3 L705.8,362.3 L701.9,367.2 L690.0,366.2 L681.1,369.2 L676.2,383.0 L668.0,398.0"/>
<path d="M654.4,412.7 L649.5,416.6 L644.5,423.5 L630.7,430.5 L624.8,438.4 L625.8,446.3 L612.9,456.2 L610.9,463.8 L605.0,465.8 L602.0,475.7 L604.0,481.6 L601.0,494.5"/>
<path d="M668.0,398.0 L674.2,405.8 L678.1,414.6 L690.0,427.5 L701.9,430.5 L711.7,423.5 L720.6,422.6 L722.6,416.6 L732.5,420.6 L739.4,435.4 L747.3,431.4 L759.2,433.4 L764.1,425.5 L777.0,426.5 L795.8,415.0 L808.6,417.6 L818.5,424.5 L823.4,430.5 L834.3,440.3 L846.2,450.2 L862.0,458.0"/>
<path d="M756.2,337.6 L763.1,345.5 L777.0,350.4 L787.8,349.0 L794.8,354.4 L791.8,361.3 L786.9,369.2 L783.9,383.0 L791.8,393.9 L788.4,404.8 L795.8,414.6"/>
<path d="M845.0,398.0 L838.2,413.7 L823.4,430.5 L816.5,436.4 L811.6,446.3 L812.5,456.2 L805.6,467.8 L802.7,485.6 L797.7,494.5 L782.9,504.4 L781.9,513.3 L785.9,520.2 L785.9,537.0 L797.7,553.8 L796.7,566.6 L792.8,574.5 L794.8,582.4 L800.7,588.4 L803.7,598.3 L796.7,610.1 L796.7,617.8 L803.7,629.6 L804.6,643.1"/>
<path d="M862.0,412.0 L845.0,410.0"/>
<path d="M525.0,487.2 L538.8,491.5 L541.7,482.6 L549.7,476.7 L557.6,471.3 L571.4,483.6 L580.3,493.5 L587.2,492.5 L601.0,495.1"/>
<path d="M523.0,523.0 L528.9,530.0 L534.0,529.0"/>
<path d="M601.0,495.1 L605.0,503.4 L610.9,517.2 L614.5,535.0 L612.9,546.9 L609.9,557.7 L613.9,568.6 L616.9,588.4 L621.8,604.2 L621.2,615.8 L616.9,629.6 L610.9,639.5 L606.0,647.4 L601.0,651.8"/>
<path d="M523.0,627.5 L534.8,632.6 L539.8,643.5 L549.7,645.5 L559.5,651.4 L571.4,648.4 L585.2,653.4 L601.0,651.8 L607.0,646.5 L616.9,629.6 L626.7,626.7 L645.0,626.0 L658.4,624.7 L666.3,622.1 L678.1,626.7 L690.0,630.6 L699.9,634.6 L706.8,642.5 L725.6,640.5 L745.3,639.1 L757.2,646.5 L768.1,652.4"/>
<path d="M601.0,651.8 L605.0,659.3 L601.0,667.2 L587.2,676.1 L577.3,680.6 L572.4,687.0 L573.4,694.9 L565.5,706.7 L558.5,728.5 L553.6,742.3 L547.7,754.2 L547.7,766.0"/>
<path d="M690.0,736.0 L682.1,746.3 L670.2,756.2 L660.0,766.0"/>
<path d="M678.0,752.0 L676.0,766.0"/>
<path d="M706.8,642.5 L709.8,655.3 L708.8,679.1 L703.8,692.9 L699.9,700.8 L694.0,718.6 L688.0,740.0"/>
<path d="M782.9,686.0 L787.8,698.8 L784.9,710.7 L775.0,717.6 L777.0,726.5 L782.9,736.4 L780.9,752.2 L781.0,766.0"/>
<path d="M743.8,702.4 L738.4,704.8 L725.6,712.7 L713.7,720.6 L701.9,730.5 L690.0,736.0"/>
<path d="M846.2,448.0 L854.1,456.9 L862.0,458.0"/>
</g>
<g stroke="#e9a962" stroke-width="3.6">
<path d="M862.0,620.5 L848.1,625.7 L836.3,632.6 L826.4,640.5 L816.5,643.1 L804.6,643.1 L797.7,655.3 L794.8,667.2 L788.8,679.1 L782.9,686.0 L769.1,691.9 L755.2,697.8 L743.8,702.4"/>
<path d="M768.1,652.4 L784.9,653.8 L797.7,655.3"/>
<path d="M601.0,651.8 L607.0,646.5 L612.0,638.0"/>
</g>
<g stroke="#fce9c6" stroke-width="1.1">
<path d="M731.5,-2.0 L726.2,17.8 L733.9,31.6 L733.9,44.5 L747.3,57.3 L757.2,72.1 L766.1,87.0 L770.6,103.8 L779.9,108.7 L781.9,119.6 L775.0,131.4 L755.2,134.8 L745.3,130.8 L726.2,136.4 L741.4,139.3 L746.3,150.2 L749.3,161.9 L752.9,173.7 L756.2,182.6 L753.3,189.5 L759.2,199.4 L765.0,212.0 L772.0,228.0 L770.6,239.3 L772.0,247.8 L765.1,260.7 L758.2,273.5 L754.2,284.4 L756.2,293.3 L757.0,305.0"/>
<path d="M823.4,-2.0 L837.3,7.9 L846.2,23.7 L862.0,35.0"/>
<path d="M523.0,305.0 L531.9,291.3 L538.8,281.4 L541.7,284.4 L552.6,282.0 L561.5,286.4 L573.4,290.7 L585.2,286.4"/>
<path d="M742.4,331.6 L738.4,337.6 L735.5,347.4 L726.6,353.4 L719.7,360.3 L705.8,362.3 L701.9,367.2 L690.0,366.2 L681.1,369.2 L676.2,383.0 L668.0,398.0"/>
<path d="M654.4,412.7 L649.5,416.6 L644.5,423.5 L630.7,430.5 L624.8,438.4 L625.8,446.3 L612.9,456.2 L610.9,463.8 L605.0,465.8 L602.0,475.7 L604.0,481.6 L601.0,494.5"/>
<path d="M668.0,398.0 L674.2,405.8 L678.1,414.6 L690.0,427.5 L701.9,430.5 L711.7,423.5 L720.6,422.6 L722.6,416.6 L732.5,420.6 L739.4,435.4 L747.3,431.4 L759.2,433.4 L764.1,425.5 L777.0,426.5 L795.8,415.0 L808.6,417.6 L818.5,424.5 L823.4,430.5 L834.3,440.3 L846.2,450.2 L862.0,458.0"/>
<path d="M756.2,337.6 L763.1,345.5 L777.0,350.4 L787.8,349.0 L794.8,354.4 L791.8,361.3 L786.9,369.2 L783.9,383.0 L791.8,393.9 L788.4,404.8 L795.8,414.6"/>
<path d="M845.0,398.0 L838.2,413.7 L823.4,430.5 L816.5,436.4 L811.6,446.3 L812.5,456.2 L805.6,467.8 L802.7,485.6 L797.7,494.5 L782.9,504.4 L781.9,513.3 L785.9,520.2 L785.9,537.0 L797.7,553.8 L796.7,566.6 L792.8,574.5 L794.8,582.4 L800.7,588.4 L803.7,598.3 L796.7,610.1 L796.7,617.8 L803.7,629.6 L804.6,643.1"/>
<path d="M862.0,412.0 L845.0,410.0"/>
<path d="M525.0,487.2 L538.8,491.5 L541.7,482.6 L549.7,476.7 L557.6,471.3 L571.4,483.6 L580.3,493.5 L587.2,492.5 L601.0,495.1"/>
<path d="M523.0,523.0 L528.9,530.0 L534.0,529.0"/>
<path d="M601.0,495.1 L605.0,503.4 L610.9,517.2 L614.5,535.0 L612.9,546.9 L609.9,557.7 L613.9,568.6 L616.9,588.4 L621.8,604.2 L621.2,615.8 L616.9,629.6 L610.9,639.5 L606.0,647.4 L601.0,651.8"/>
<path d="M523.0,627.5 L534.8,632.6 L539.8,643.5 L549.7,645.5 L559.5,651.4 L571.4,648.4 L585.2,653.4 L601.0,651.8 L607.0,646.5 L616.9,629.6 L626.7,626.7 L645.0,626.0 L658.4,624.7 L666.3,622.1 L678.1,626.7 L690.0,630.6 L699.9,634.6 L706.8,642.5 L725.6,640.5 L745.3,639.1 L757.2,646.5 L768.1,652.4"/>
<path d="M601.0,651.8 L605.0,659.3 L601.0,667.2 L587.2,676.1 L577.3,680.6 L572.4,687.0 L573.4,694.9 L565.5,706.7 L558.5,728.5 L553.6,742.3 L547.7,754.2 L547.7,766.0"/>
<path d="M690.0,736.0 L682.1,746.3 L670.2,756.2 L660.0,766.0"/>
<path d="M678.0,752.0 L676.0,766.0"/>
<path d="M706.8,642.5 L709.8,655.3 L708.8,679.1 L703.8,692.9 L699.9,700.8 L694.0,718.6 L688.0,740.0"/>
<path d="M782.9,686.0 L787.8,698.8 L784.9,710.7 L775.0,717.6 L777.0,726.5 L782.9,736.4 L780.9,752.2 L781.0,766.0"/>
<path d="M743.8,702.4 L738.4,704.8 L725.6,712.7 L713.7,720.6 L701.9,730.5 L690.0,736.0"/>
<path d="M846.2,448.0 L854.1,456.9 L862.0,458.0"/>
</g>
<g stroke="#f6cf9a" stroke-width="1.6">
<path d="M862.0,620.5 L848.1,625.7 L836.3,632.6 L826.4,640.5 L816.5,643.1 L804.6,643.1 L797.7,655.3 L794.8,667.2 L788.8,679.1 L782.9,686.0 L769.1,691.9 L755.2,697.8 L743.8,702.4"/>
<path d="M768.1,652.4 L784.9,653.8 L797.7,655.3"/>
<path d="M601.0,651.8 L607.0,646.5 L612.0,638.0"/>
</g>
</g>
<g font-family="'DejaVu Sans Condensed','DejaVu Sans',sans-serif" fill="#2b3b4d" stroke="#f5f6f8" stroke-width="2" paint-order="stroke" stroke-linejoin="round">
<text x="626.5" y="634.6" font-size="11.5">Karlstad</text>
<text x="785" y="653.8" font-size="11.8">Örebro</text>
<text x="828" y="410.3" font-size="12">Falun</text>
<text x="716" y="583.5" font-size="13" font-weight="700" letter-spacing="-0.25" fill="#152a45">Sverige</text>
</g>
<path d="M539.2,90.5 L566.8,100.4 L585.2,99.4 L592.7,115.2 L598.7,116.6 L606.0,139.4 L607.0,154.5 L613.9,152.3 L626.7,159.8 L638.6,174.7 L648.1,197.0 L657.4,208.3 L652.8,212.3 L660.9,223.7 L671.2,211.9 L690.0,215.0 L709.8,216.8 L724.6,219.6 L728.9,226.7 L738.8,214.8 L740.4,194.5 L741.8,184.6 L756.0,162.2 L759.6,173.7 L766.1,182.6 L774.6,187.0 L779.9,197.0 L786.9,199.0 L788.8,204.4 L796.7,214.2 L803.7,239.3 L822.8,269.6 L844.2,291.9 L846.2,312.1 L854.1,324.7 L862.0,330.0 L940.0,350.0 L940.0,690.0 L862.0,694.0 L856.0,696.9 L852.1,704.8 L847.1,702.8 L847.1,712.7 L837.3,716.6 L835.3,720.6 L826.4,722.6 L824.4,730.5 L818.5,724.5 L813.5,725.5 L808.6,723.0 L803.7,729.5 L797.7,730.5 L792.8,732.8 L788.8,746.3 L781.9,753.2 L777.0,752.2 L764.1,759.1 L758.2,752.2 L755.2,736.4 L750.3,723.5 L743.0,713.7 L743.8,704.8 L740.4,698.8 L732.5,695.9 L721.6,698.8 L719.6,702.8 L709.8,699.8 L704.2,702.8 L701.9,694.9 L698.9,692.5 L690.0,692.7 L656.4,687.6 L641.0,704.4 L633.1,730.9 L641.0,742.7 L625.2,746.7 L617.8,740.7 L593.1,730.5 L581.7,688.0 L580.3,675.1 L570.0,665.2 L568.4,672.1 L563.9,675.7 L558.5,665.2 L557.6,659.3 L552.6,648.4 L554.0,642.5 L552.6,639.1 L549.7,642.5 L550.6,657.3 L548.7,663.3 L543.7,667.2 L538.8,664.2 L534.8,663.3 L530.9,651.4 L524.9,653.4 L510.0,655.0 L510.0,545.0 L524.9,539.3 L526.9,538.6 L531.9,531.0 L540.8,525.1 L545.7,518.2 L552.6,512.3 L557.6,501.4 L560.5,483.6 L557.6,470.8 L557.2,459.5 L566.5,446.3 L567.0,424.5 L558.1,408.7 L557.6,400.8 L546.7,384.0 L542.1,365.2 L541.7,354.4 L532.3,331.0 L551.6,324.1 L572.4,323.7 L576.3,306.9 L581.3,300.0 L584.2,296.3 L587.2,284.4 L591.2,267.2 L562.5,225.7 L549.3,226.7 L541.7,216.8 L534.8,212.3 L524.9,197.0 L530.9,150.0Z" fill="#10519f" fill-opacity="0.2" stroke="#0f519f" stroke-width="2.2" stroke-linejoin="round"/>
<path d="M523,44 L539.2,90.5" stroke="#0f519f" stroke-width="2" fill="none"/>
<g font-family="'Liberation Sans',sans-serif" font-size="12" text-anchor="middle" fill="#222">
<circle cx="625" cy="209" r="20.3" fill="#f5f6f8" stroke="#5d646b" stroke-width="1"/><text x="625" y="213.3">24</text>
<circle cx="772" cy="217.7" r="20.3" fill="#f5f6f8" stroke="#5d646b" stroke-width="1"/><text x="772" y="222.0">37</text>
<circle cx="778.4" cy="302.8" r="20.3" fill="#f5f6f8" stroke="#5d646b" stroke-width="1"/><text x="778.4" y="307.1">31</text>
<circle cx="757.2" cy="315.3" r="20.3" fill="#f5f6f8" stroke="#5d646b" stroke-width="1"/><text x="757.2" y="319.6">18</text>
<circle cx="632.7" cy="314.6" r="20.3" fill="#f5f6f8" stroke="#5d646b" stroke-width="1"/><text x="632.7" y="318.9">20</text>
<circle cx="831.9" cy="388" r="20.3" fill="#f5f6f8" stroke="#5d646b" stroke-width="1"/><text x="831.9" y="392.3">13</text>
<circle cx="657" cy="391.5" r="20.3" fill="#f5f6f8" stroke="#5d646b" stroke-width="1"/><text x="657" y="395.8">18</text>
<circle cx="582.3" cy="403.8" r="20.3" fill="#f5f6f8" stroke="#5d646b" stroke-width="1"/><text x="582.3" y="408.1">12</text>
<circle cx="711.7" cy="476.7" r="20.3" fill="#f5f6f8" stroke="#5d646b" stroke-width="1"/><text x="711.7" y="481.0">15</text>
<circle cx="714.7" cy="527.7" r="20.3" fill="#f5f6f8" stroke="#5d646b" stroke-width="1"/><text x="714.7" y="532.0">11</text>
</g>
<!--/MAPCONTENT-->
</svg>
<div id="globe"><svg width="20" height="20" viewBox="0 0 20 20" fill="none" stroke="#1f6fc8" stroke-width="1.6"><circle cx="10" cy="10" r="9"/><ellipse cx="10" cy="10" rx="4.8" ry="9"/><path d="M10,1 V19 M1.8,6.7 H18.2 M1.8,13.3 H18.2"/></svg></div>
<div id="pill">Svealand</div>
<div id="attr">© <a>OpenStreetMap</a></div>
</div>
</body>
</html>
